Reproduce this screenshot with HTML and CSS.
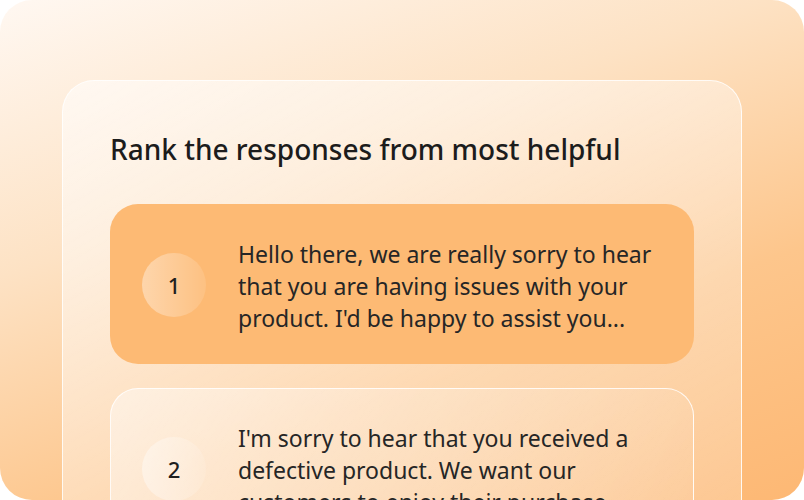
FILE: index.html
```html
<!DOCTYPE html>
<html lang="en">
<head>
    <meta charset="UTF-8">
    <meta name="viewport" content="width=device-width, initial-scale=1.0">
    <title>Rank responses</title>
    <link rel="stylesheet" href="styles.css">
</head>
<body>
    <div class="canvas">
        <div class="rank-card">
            <h2>Rank the responses from most helpful</h2>

            <div class="response-list">
                <!-- Selected response -->
                <div class="response active">
                    <div class="rank">1</div>
                    <p>Hello there, we are really sorry to hear<br>that you are having issues with your<br>product. I'd be happy to assist you...</p>
                </div>

                <div class="response">
                    <div class="rank">2</div>
                    <p>I'm sorry to hear that you received a<br>defective product. We want our<br>customers to enjoy their purchase...</p>
                </div>
            </div>
        </div>
    </div>
</body>
</html>
```

FILE: styles.css
```css
body {
    margin: 0;
    padding: 0;
    background: white;
    font-family: 'Noto Sans', sans-serif;
    color: #1f1f1f;
}
h2, p {
    margin: 0;
    padding: 0;
}

.canvas {
    width: 804px;
    height: 500px;
    box-sizing: border-box;
    padding: 80px 62px 0;
    border-radius: 32px;
    overflow: hidden;
    background: linear-gradient(160deg, #fff8f2 0%, #fde2c4 35%, #fdc68c 68%, #fdb874 100%);
}

.rank-card {
    height: 600px;
    padding: 47px;
    border: 1px solid rgba(255, 255, 255, 0.85);
    border-radius: 32px;
    background: linear-gradient(150deg, rgba(255, 255, 255, 0.55), rgba(255, 255, 255, 0.1));
}

.rank-card h2 {
    font-size: 28px;
    font-weight: 500;
    line-height: 42px;
    margin-bottom: 34px;
    color: #1c1c1c;
}

.response-list {
    display: flex;
    flex-direction: column;
    gap: 24px;
}

.response {
    display: flex;
    align-items: center;
    gap: 32px;
    padding: 31px 31px 29px;
    border-radius: 28px;
    border: 1px solid rgba(255, 255, 255, 0.85);
    background: linear-gradient(120deg, rgba(255, 255, 255, 0.45), rgba(255, 255, 255, 0.05));
}

.response.active {
    padding: 32px 32px 30px;
    border: none;
    background: #fdba74;
}

.rank {
    flex: none;
    width: 64px;
    height: 64px;
    border-radius: 50%;
    display: flex;
    align-items: center;
    justify-content: center;
    font-size: 22px;
    font-weight: 500;
    background: linear-gradient(90deg, rgba(255, 255, 255, 0.4), rgba(255, 255, 255, 0.1));
}

.response p {
    padding-top: 2px;
    font-size: 23px;
    line-height: 32px;
    color: #262626;
    white-space: nowrap;
}
```
